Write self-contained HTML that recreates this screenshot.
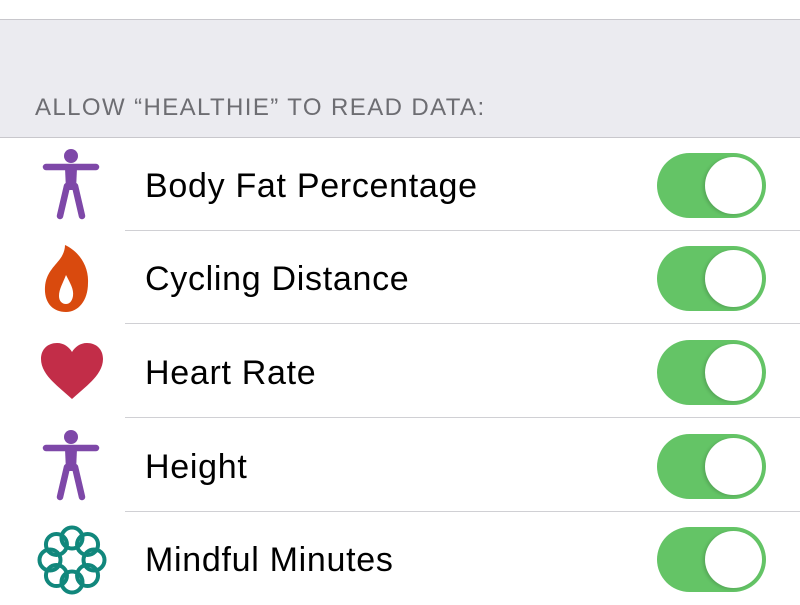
<!DOCTYPE html>
<html><head><style>
body{margin:0;width:800px;height:600px;overflow:hidden;background:#fff;font-family:"Liberation Sans",sans-serif;position:relative}
.gray{position:absolute;left:0;top:19px;width:800px;height:119px;background:#ebebf0;border-top:1px solid #c8c7cc;border-bottom:1px solid #c8c7cc;box-sizing:border-box}
.hdr{position:absolute;left:35px;top:94px;font-size:24px;color:#6d6d72;letter-spacing:1.4px}
.row{position:absolute;left:0;width:800px;height:93px}
.sep{position:absolute;left:125px;right:0;bottom:0;height:1px;background:#d0d0d4}
.lbl{position:absolute;left:145px;top:29px;font-size:34px;color:#000;letter-spacing:0.7px}
.tg{position:absolute;left:657px;top:15px;width:109px;height:65px;border-radius:33px;background:#64c466}
.kn{position:absolute;right:4px;top:4px;width:57px;height:57px;border-radius:50%;background:#fff;box-shadow:-2px 1px 3px rgba(0,0,0,.15)}
svg{position:absolute}
</style></head><body>
<div class="gray"></div>
<div class="hdr">ALLOW “HEALTHIE” TO READ DATA:</div>

<div class="row" style="top:138px">
<svg style="left:36px;top:6px" width="70" height="80" viewBox="0 0 70 80"><circle cx="35" cy="12" r="7" fill="#7e48a8"/><path d="M10 23 L60 23 M35 25 L35 42 M31 42 L24 72 M39 42 L46 72" stroke="#7e48a8" stroke-width="6.5" stroke-linecap="round" fill="none"/><path d="M29 24 H41 L40 46 H30 Z" fill="#7e48a8"/></svg>
<div class="lbl">Body Fat Percentage</div><div class="tg"><div class="kn"></div></div><div class="sep"></div></div>

<div class="row" style="top:231px">
<svg style="left:40px;top:12px" width="52" height="72" viewBox="0 0 52 72"><path d="M25 2 C38 8 49 22 48 40 C48 58 38 69 26 69 C13 69 4 60 5 44 C6 30 14 24 20 16 C23 12 25 7 25 2 Z" fill="#d94a0e"/><path d="M26 32 C30 40 34 46 33 53 C32 59 29 61 26 61 C22 61 19 58 19 53 C19 46 23 40 26 32 Z" fill="#fff"/></svg>
<div class="lbl">Cycling Distance</div><div class="tg"><div class="kn"></div></div><div class="sep"></div></div>

<div class="row" style="top:325px">
<svg style="left:39px;top:16px" width="66" height="60" viewBox="0 0 66 60"><path d="M33 58 C20 46 2 34 2 18 C2 8 9 2 18 2 C25 2 30 6 33 11 C36 6 41 2 48 2 C57 2 64 8 64 18 C64 34 46 46 33 58 Z" fill="#c22d48"/></svg>
<div class="lbl">Heart Rate</div><div class="tg"><div class="kn"></div></div><div class="sep"></div></div>

<div class="row" style="top:419px">
<svg style="left:36px;top:6px" width="70" height="80" viewBox="0 0 70 80"><circle cx="35" cy="12" r="7" fill="#7e48a8"/><path d="M10 23 L60 23 M35 25 L35 42 M31 42 L24 72 M39 42 L46 72" stroke="#7e48a8" stroke-width="6.5" stroke-linecap="round" fill="none"/><path d="M29 24 H41 L40 46 H30 Z" fill="#7e48a8"/></svg>
<div class="lbl">Height</div><div class="tg"><div class="kn"></div></div><div class="sep"></div></div>

<div class="row" style="top:512px">
<svg style="left:36px;top:11px" width="72" height="74" viewBox="-36 -37 72 74"><g fill="none" stroke="#11877c" stroke-width="4">
<circle cx="0" cy="-22" r="10.5"/><circle cx="0" cy="-22" r="10.5" transform="rotate(45)"/><circle cx="0" cy="-22" r="10.5" transform="rotate(90)"/><circle cx="0" cy="-22" r="10.5" transform="rotate(135)"/><circle cx="0" cy="-22" r="10.5" transform="rotate(180)"/><circle cx="0" cy="-22" r="10.5" transform="rotate(225)"/><circle cx="0" cy="-22" r="10.5" transform="rotate(270)"/><circle cx="0" cy="-22" r="10.5" transform="rotate(315)"/></g></svg>
<div class="lbl">Mindful Minutes</div><div class="tg"><div class="kn"></div></div></div>
</body></html>
